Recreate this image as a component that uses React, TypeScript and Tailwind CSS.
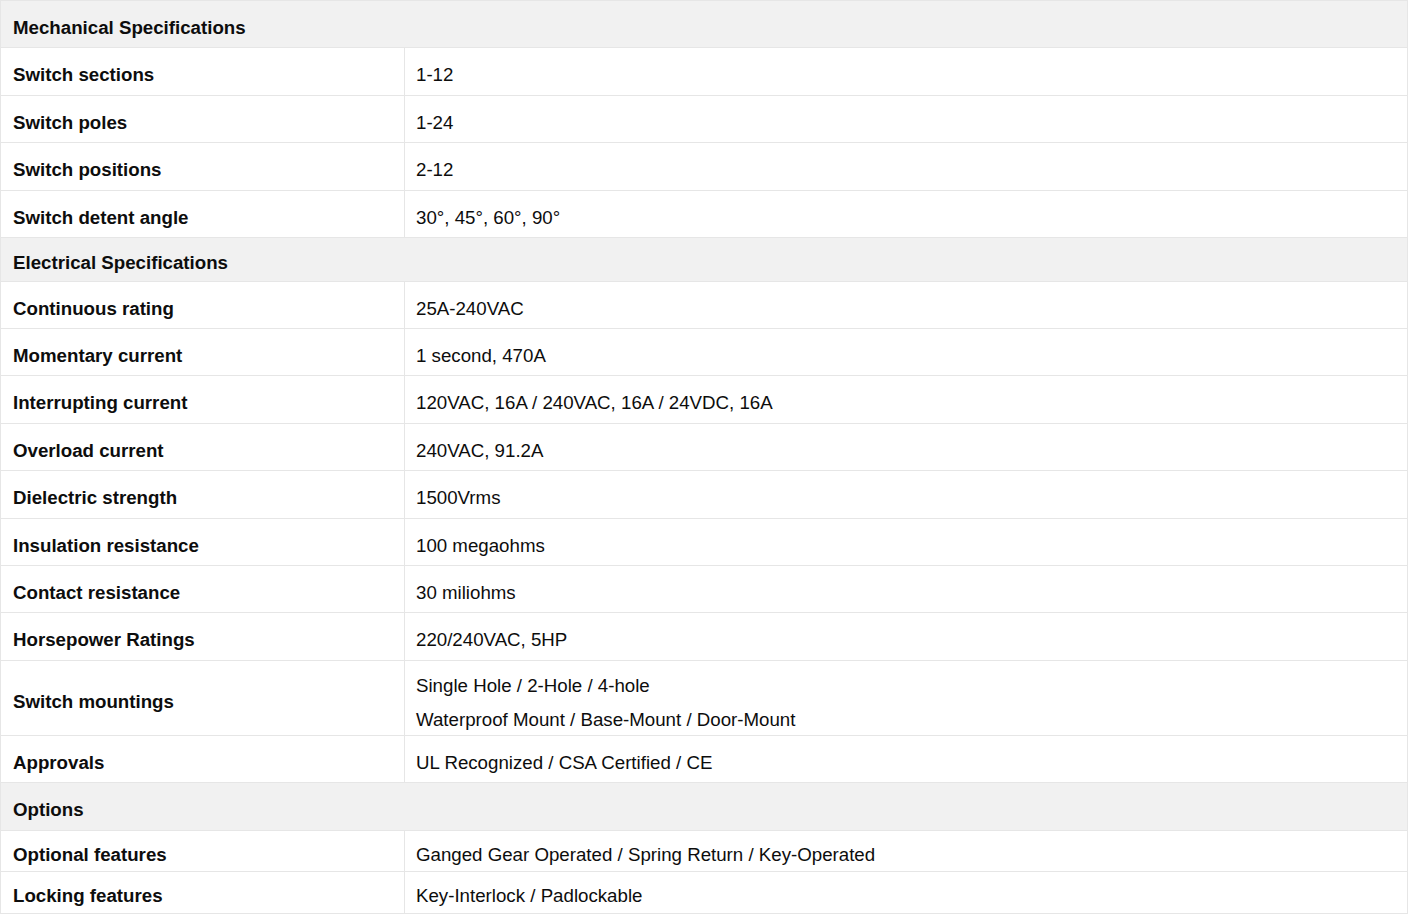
type Row =
  | { kind: "section"; title: string; h: string }
  | { kind: "item"; label: string; value: string[]; h: string };

const rows: Row[] = [
  { kind: "section", title: "Mechanical Specifications", h: "h-[47px]" },
  { kind: "item", label: "Switch sections", value: ["1-12"], h: "h-[48px]" },
  { kind: "item", label: "Switch poles", value: ["1-24"], h: "h-[47px]" },
  { kind: "item", label: "Switch positions", value: ["2-12"], h: "h-[48px]" },
  { kind: "item", label: "Switch detent angle", value: ["30°, 45°, 60°, 90°"], h: "h-[47px]" },
  { kind: "section", title: "Electrical Specifications", h: "h-[44px]" },
  { kind: "item", label: "Continuous rating", value: ["25A-240VAC"], h: "h-[47px]" },
  { kind: "item", label: "Momentary current", value: ["1 second, 470A"], h: "h-[47px]" },
  { kind: "item", label: "Interrupting current", value: ["120VAC, 16A / 240VAC, 16A / 24VDC, 16A"], h: "h-[48px]" },
  { kind: "item", label: "Overload current", value: ["240VAC, 91.2A"], h: "h-[47px]" },
  { kind: "item", label: "Dielectric strength", value: ["1500Vrms"], h: "h-[48px]" },
  { kind: "item", label: "Insulation resistance", value: ["100 megaohms"], h: "h-[47px]" },
  { kind: "item", label: "Contact resistance", value: ["30 miliohms"], h: "h-[47px]" },
  { kind: "item", label: "Horsepower Ratings", value: ["220/240VAC, 5HP"], h: "h-[48px]" },
  {
    kind: "item",
    label: "Switch mountings",
    value: ["Single Hole / 2-Hole / 4-hole", "Waterproof Mount / Base-Mount / Door-Mount"],
    h: "h-[75px]",
  },
  { kind: "item", label: "Approvals", value: ["UL Recognized / CSA Certified / CE"], h: "h-[47px]" },
  { kind: "section", title: "Options", h: "h-[48px]" },
  { kind: "item", label: "Optional features", value: ["Ganged Gear Operated / Spring Return / Key-Operated"], h: "h-[41px]" },
  { kind: "item", label: "Locking features", value: ["Key-Interlock / Padlockable"], h: "h-[42px]" },
];

const SpecTable = () => {
  return (
    <table className="w-[1408px] border-collapse text-[18.7px] text-[#0d0d0d]">
      <colgroup>
        <col className="w-[404px]" />
        <col />
      </colgroup>
      <tbody>
        {rows.map((row, i) =>
          row.kind === "section" ? (
            <tr key={i} className={`${row.h} bg-[#f1f1f1]`}>
              <td colSpan={2} className="border border-[#e6e6e6] px-3 pt-2 pb-0 align-middle font-bold">
                {row.title}
              </td>
            </tr>
          ) : (
            <tr key={i} className={row.h}>
              <td className="border border-[#e6e6e6] px-3 pt-2 pb-0 align-middle font-bold">{row.label}</td>
              <td className="border border-[#e6e6e6] px-[11px] pt-2 pb-0 align-middle">
                {row.value.length > 1 ? (
                  <div className="flex flex-col gap-[7px]">
                    {row.value.map((v) => (
                      <div key={v} className="leading-[27px]">
                        {v}
                      </div>
                    ))}
                  </div>
                ) : (
                  row.value[0]
                )}
              </td>
            </tr>
          )
        )}
      </tbody>
    </table>
  );
};

export default function App() {
  return (
    <div className="min-h-[918px] bg-white" style={{ fontFamily: '"Liberation Sans", Arial, sans-serif' }}>
      <SpecTable />
    </div>
  );
}
